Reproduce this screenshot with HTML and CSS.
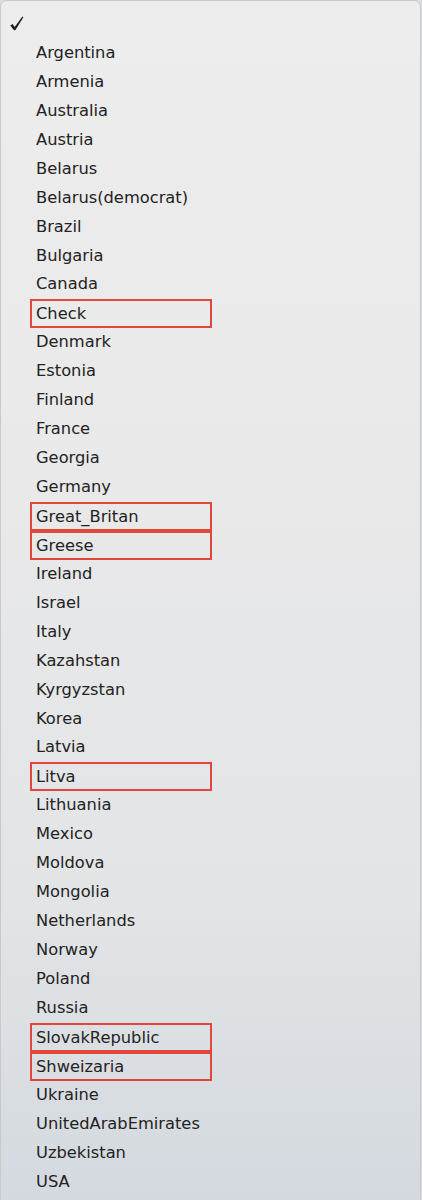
FILE: index.html
```html
<!DOCTYPE html>
<html lang="en">
<head>
<meta charset="utf-8">
<title>Country menu</title>
<link rel="stylesheet" href="styles.css">
</head>
<body>
<div class="menu">
  <ul class="list">
    <li class="row"><svg class="check" viewBox="0 0 16 16" width="16" height="16" aria-hidden="true"><path d="M1.3 9.6 L3.6 8 L5.7 11 L13.4 0.6 L14.4 1.3 L6.3 14.2 L5 14.2 Z"/></svg></li>
    <li class="row"><span class="label">Argentina</span></li>
    <li class="row"><span class="label">Armenia</span></li>
    <li class="row"><span class="label">Australia</span></li>
    <li class="row"><span class="label">Austria</span></li>
    <li class="row"><span class="label">Belarus</span></li>
    <li class="row"><span class="label">Belarus(democrat)</span></li>
    <li class="row"><span class="label">Brazil</span></li>
    <li class="row"><span class="label">Bulgaria</span></li>
    <li class="row"><span class="label">Canada</span></li>
    <li class="row"><span class="label flagged">Check</span></li>
    <li class="row"><span class="label">Denmark</span></li>
    <li class="row"><span class="label">Estonia</span></li>
    <li class="row"><span class="label">Finland</span></li>
    <li class="row"><span class="label">France</span></li>
    <li class="row"><span class="label">Georgia</span></li>
    <li class="row"><span class="label">Germany</span></li>
    <li class="row"><span class="label flagged">Great_Britan</span></li>
    <li class="row"><span class="label flagged">Greese</span></li>
    <li class="row"><span class="label">Ireland</span></li>
    <li class="row"><span class="label">Israel</span></li>
    <li class="row"><span class="label">Italy</span></li>
    <li class="row"><span class="label">Kazahstan</span></li>
    <li class="row"><span class="label">Kyrgyzstan</span></li>
    <li class="row"><span class="label">Korea</span></li>
    <li class="row"><span class="label">Latvia</span></li>
    <li class="row"><span class="label flagged">Litva</span></li>
    <li class="row"><span class="label">Lithuania</span></li>
    <li class="row"><span class="label">Mexico</span></li>
    <li class="row"><span class="label">Moldova</span></li>
    <li class="row"><span class="label">Mongolia</span></li>
    <li class="row"><span class="label">Netherlands</span></li>
    <li class="row"><span class="label">Norway</span></li>
    <li class="row"><span class="label">Poland</span></li>
    <li class="row"><span class="label">Russia</span></li>
    <li class="row"><span class="label flagged">SlovakRepublic</span></li>
    <li class="row"><span class="label flagged">Shweizaria</span></li>
    <li class="row"><span class="label">Ukraine</span></li>
    <li class="row"><span class="label">UnitedArabEmirates</span></li>
    <li class="row"><span class="label">Uzbekistan</span></li>
    <li class="row"><span class="label">USA</span></li>
  </ul>
</div>
</body>
</html>
```

FILE: styles.css
```css
html, body {
  margin: 0;
  padding: 0;
  background: #d9dde1;
}

.menu {
  width: 421px;
  height: 1210px;
  box-sizing: border-box;
  border: 1px solid #c9c9c9;
  border-radius: 7px 7px 0 0;
  background: linear-gradient(to bottom, #ededed 0%, #e9e9ea 40%, #e2e4e6 75%, #d3d9df 100%);
  font-family: "DejaVu Sans", "Liberation Sans", sans-serif;
  font-size: 16.3px;
  color: #232323;
  padding-top: 9px;
}

.list {
  list-style: none;
  margin: 0;
  padding: 0;
}

.row {
  height: 28.95px;
  line-height: 28.95px;
  padding-left: 35px;
  display: flex;
  align-items: center;
  position: relative;
}

.check {
  position: absolute;
  left: 8px;
  top: 6px;
  fill: #1f1f1f;
}

.label {
  white-space: nowrap;
}

.label.flagged {
  box-sizing: border-box;
  width: 182px;
  height: 29px;
  line-height: 25px;
  margin-left: -6px;
  padding-left: 4px;
  border: 2px solid #e2473b;
}
```
